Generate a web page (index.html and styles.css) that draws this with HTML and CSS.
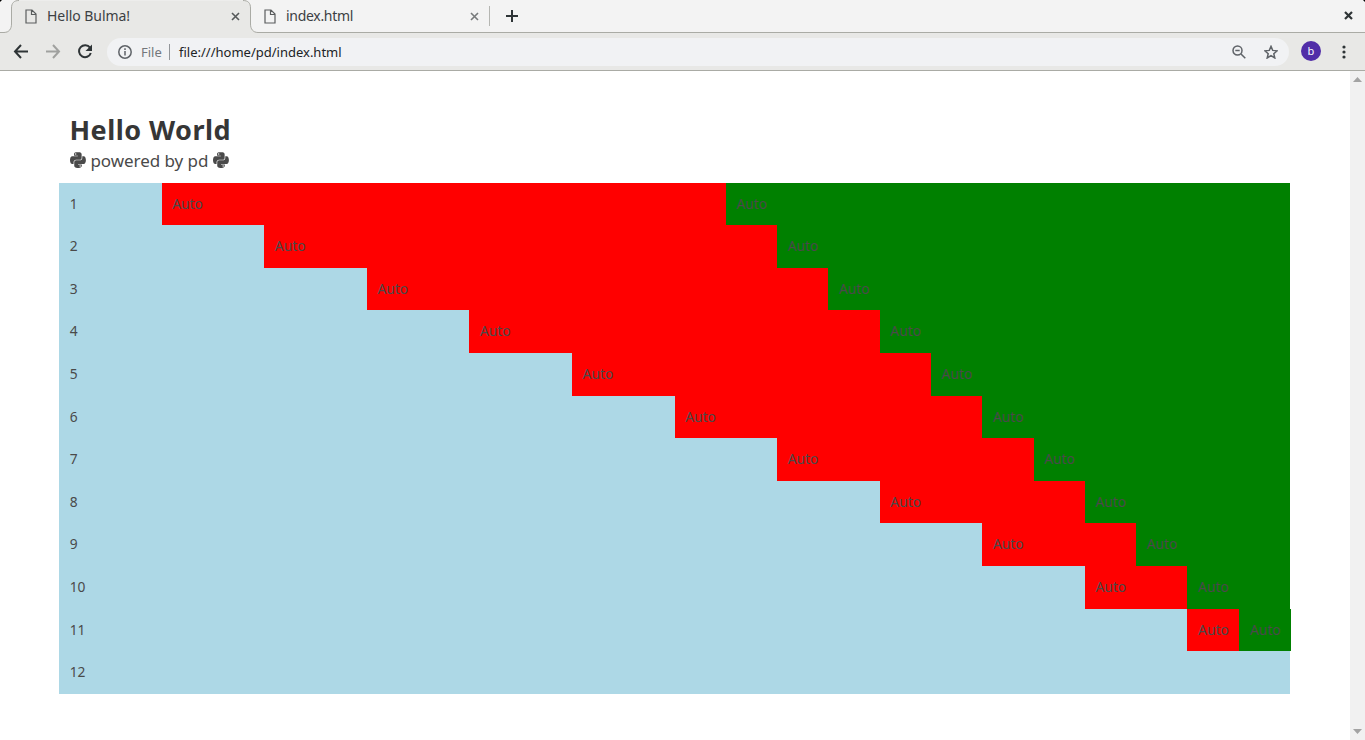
FILE: index.html
```html
<!DOCTYPE html>
<html lang="en">
<head>
<meta charset="utf-8">
<title>Hello Bulma!</title>
<link rel="stylesheet" href="styles.css">
</head>
<body>
<div class="browser">
  <div class="tabs">
    <div class="tab active">
      <svg class="tab-shape" width="264" height="34" viewBox="0 0 264 34"><path class="fill" d="M0 32.5C8 32.5 11.5 29 11.5 23V8C11.5 3 14 .5 19 .5H243C248 .5 250.500 3 250.500 8V23C250.500 29 254 32.500 260 32.500V34H0z"/><path class="edge" d="M0 32.500H4C9 32.500 11.500 29 11.500 24V8C11.500 3 14 .5 19 .5M243 .5C248 .5 250.500 3 250.500 8V24C250.500 29 253 32.500 258 32.500H264"/><path class="corner" d="M0 0h2L0 2z"/></svg>
      <svg class="doc" width="12" height="15" viewBox="0 0 12 15"><path d="M1 1h6l4 4v9H1zM6.500 1v4.500H11"/></svg>
      <span class="tab-title t1">Hello Bulma!</span>
      <svg class="close" width="9" height="9" viewBox="0 0 9 9"><path d="M1 1l7 7M8 1L1 8"/></svg>
    </div>
    <div class="tab second">
      <svg class="doc" width="12" height="15" viewBox="0 0 12 15"><path d="M1 1h6l4 4v9H1zM6.500 1v4.500H11"/></svg>
      <span class="tab-title t2">index.html</span>
      <svg class="close dim" width="9" height="9" viewBox="0 0 9 9"><path d="M1 1l7 7M8 1L1 8"/></svg>
    </div>
    <svg class="plus" width="12" height="12" viewBox="0 0 12 12"><path d="M6 0v12M0 6h12"/></svg>
    <svg class="win-close" width="9" height="9" viewBox="0 0 9 9"><path d="M1 1l7 7M8 1L1 8"/></svg>
    <svg class="right-corner" width="3" height="3" viewBox="0 0 3 3"><path d="M1 0h2v2z"/></svg>
  </div>
  <div class="toolbar">
    <svg class="nav" width="16" height="16" viewBox="0 0 16 16"><path d="M15 7.500H2.500M8 1L2 7.500 8 14"/></svg>
    <svg class="nav faded" width="16" height="16" viewBox="0 0 16 16"><path d="M1 7.500h12.500M8 1l6 6.500L8 14"/></svg>
    <svg class="nav" width="16" height="16" viewBox="0 0 16 16"><path d="M13 3.700A6 6 0 1 0 13.800 9"/><path class="solid" d="M15 .5V7H8.500z"/></svg>
    <div class="omnibox">
      <svg class="info" width="14" height="14" viewBox="0 0 14 14"><circle cx="7" cy="7" r="6.200"/><path d="M7 6v4.500M7 3.300v1.700"/></svg>
      <span class="scheme">File</span>
      <span class="url">file:///home/pd/index.html</span>
      <svg class="mag" width="14" height="14" viewBox="0 0 14 14"><circle cx="5.500" cy="5.500" r="4.500"/><path d="M3.300 5.500h4.400M9 9l4.300 4.300"/></svg>
      <svg class="star" width="14" height="14" viewBox="0 0 14 14"><path d="M7 1.400l1.700 4 4.400.4-3.300 2.900 1 4.300L7 10.700 3.200 13l1-4.300L.9 5.800l4.400-.4z"/></svg>
    </div>
    <span class="avatar">b</span>
    <svg class="menu" width="4" height="14" viewBox="0 0 4 14"><circle cx="2" cy="2" r="1.600"/><circle cx="2" cy="7" r="1.600"/><circle cx="2" cy="12" r="1.600"/></svg>
  </div>
  <div class="viewport">
    <main class="page">
      <h1 class="title"><span>Hello World</span></h1>
      <p class="subtitle">
        <svg class="python" viewBox="0 0 448 512"><path id="py" d="M439.800 200.500c-7.700-30.900-22.300-54.200-53.400-54.200h-40.100v47.400c0 36.800-31.200 67.800-66.800 67.800H172.700c-29.200 0-53.400 25-53.400 54.300v101.800c0 29 25.200 46 53.400 54.300 33.800 9.900 66.300 11.700 106.800 0 26.900-7.800 53.400-23.500 53.400-54.300v-40.700H226.200v-13.600h160.200c31.100 0 42.600-21.700 53.400-54.200 11.200-33.500 10.700-65.700 0-108.600zM286.200 404c11.100 0 20.100 9.100 20.100 20.300 0 11.300-9 20.400-20.100 20.400-11 0-20.100-9.200-20.100-20.400.1-11.300 9.100-20.300 20.100-20.300zM167.800 248.100h106.800c29.700 0 53.400-24.500 53.400-54.300V91.900c0-29-24.400-50.700-53.400-55.600-35.800-5.900-74.700-5.600-106.800.1-45.200 8-53.400 24.700-53.400 55.600v40.700h106.900v13.600h-147c-31.100 0-58.300 18.700-66.800 54.200-9.800 40.700-10.200 66.100 0 108.600 7.600 31.600 25.700 54.200 56.800 54.200H101v-48.800c0-35.300 30.500-66.400 66.800-66.400zm-6.700-142.600c-11.100 0-20.100-9.100-20.100-20.300.1-11.300 9-20.400 20.100-20.400 11 0 20.100 9.200 20.100 20.400s-9 20.300-20.100 20.300z"/></svg>
        <span>powered by pd</span>
        <svg class="python" viewBox="0 0 448 512"><use href="#py"/></svg>
      </p>
      <div class="rows">
        <div class="columns"><div class="column first c1">1</div><div class="column red">Auto</div><div class="column green">Auto</div></div>
        <div class="columns"><div class="column first c2">2</div><div class="column red">Auto</div><div class="column green">Auto</div></div>
        <div class="columns"><div class="column first c3">3</div><div class="column red">Auto</div><div class="column green">Auto</div></div>
        <div class="columns"><div class="column first c4">4</div><div class="column red">Auto</div><div class="column green">Auto</div></div>
        <div class="columns"><div class="column first c5">5</div><div class="column red">Auto</div><div class="column green">Auto</div></div>
        <div class="columns"><div class="column first c6">6</div><div class="column red">Auto</div><div class="column green">Auto</div></div>
        <div class="columns"><div class="column first c7">7</div><div class="column red">Auto</div><div class="column green">Auto</div></div>
        <div class="columns"><div class="column first c8">8</div><div class="column red">Auto</div><div class="column green">Auto</div></div>
        <div class="columns"><div class="column first c9">9</div><div class="column red">Auto</div><div class="column green">Auto</div></div>
        <div class="columns"><div class="column first c10">10</div><div class="column red">Auto</div><div class="column green">Auto</div></div>
        <div class="columns"><div class="column first c11">11</div><div class="column red">Auto</div><div class="column green">Auto</div></div>
        <div class="columns"><div class="column first c12">12</div></div>
      </div>
    </main>
    <div class="scrollbar">
      <svg width="9" height="5" viewBox="0 0 9 5"><path d="M0 5l4.500-5L9 5z"/></svg>
      <svg width="9" height="5" viewBox="0 0 9 5"><path d="M0 0l4.500 5L9 0z"/></svg>
    </div>
  </div>
</div>
</body>
</html>
```
FILE: styles.css
```css
* { box-sizing: border-box; }
body { margin: 0; background: #fff; font-family: "Noto Sans", "Open Sans", sans-serif; overflow: hidden; }
svg { display: block; flex: none; fill: none; }
span { white-space: nowrap; }
.browser { width: 1365px; height: 740px; display: flex; flex-direction: column; }
.tabs { position: relative; height: 33px; flex: none; display: flex; align-items: center; background: #f3f3f3; border-bottom: 1px solid #aaaba5; }
.tab { display: flex; align-items: center; height: 32px; font-size: 14px; color: #3c4043; }
.tab.active { position: relative; width: 251px; padding: 0 11px 0 25px; }
.tab.second { width: 239px; padding: 0 0 0 13px; }
.tab.second::after { content: ""; width: 1px; height: 20px; margin-left: 10px; background: #b5b6b2; }
.tab-shape { position: absolute; left: 0; top: 0; }
.tab-shape .fill { fill: #e8e8e6; }
.tab-shape .edge { stroke: #aaaba5; }
.tab-shape .corner, .right-corner { fill: #000; }
.right-corner { position: absolute; right: 0; top: 0; }
.doc, .tab-title, .close { position: relative; }
.doc { stroke: #5a5d5e; stroke-width: 1.2; }
.tab-title { margin-left: 10px; flex: 1; padding-bottom: 2px; }
.t1 { letter-spacing: -0.05px; }
.t2 { letter-spacing: -0.3px; }
.close { stroke: #55595a; stroke-width: 1.6; }
.close.dim { stroke: #777a7b; }
.plus { margin-left: 16px; stroke: #2e3436; stroke-width: 2; }
.win-close { margin-left: auto; margin-right: 12.500px; margin-bottom: 2px; stroke: #2e3436; stroke-width: 2.2; }
.toolbar { height: 38px; flex: none; display: flex; align-items: center; background: #e8e8e6; border-bottom: 1px solid #aaaba5; padding: 0 19.500px 0 13px; }
.nav { margin-right: 16px; stroke: #2e3436; stroke-width: 2; }
.nav.faded { stroke: #a0a19f; }
.nav .solid { fill: #2e3436; stroke: none; }
.omnibox { width: 1182px; height: 28px; margin-left: -2px; padding: 0 11px; border-radius: 14px; background: #f1f2f4; display: flex; align-items: center; font-size: 13px; color: #202326; }
.info { stroke: #5f6368; stroke-width: 1.5; }
.scheme { width: 29px; margin-left: 9px; padding-right: 8px; color: #73777b; border-right: 1px solid #93969a; line-height: 16px; }
.url { margin-left: 9px; flex: 1; }
.mag, .star { stroke: #5f6368; stroke-width: 1.5; }
.star { margin-left: 18px; }
.avatar { width: 20px; height: 20px; margin-left: 12px; margin-bottom: 2px; border-radius: 50%; background: #512da8; color: #fff; font-size: 11px; line-height: 20px; text-align: center; }
.menu { fill: #2e3436; margin-left: auto; }
.viewport { flex: 1; display: flex; min-height: 0; }
.page { flex: 1; padding: 43px 60px 0 59px; color: #4a4a4a; }
.title { margin: 0; padding-left: 10.500px; font-size: 27px; line-height: 32px; font-weight: 700; letter-spacing: .47px; color: #363636; }
.subtitle { margin: 0; height: 36.600px; padding: 4px 0 0 11px; display: flex; font-size: 17px; line-height: 22px; letter-spacing: -0.05px; }
.subtitle span { margin: 0 5px 0 4.500px; }
.python { width: 15.900px; height: 18.200px; margin-top: .8px; fill: #4a4a4a; }
.rows { width: 1231px; font-size: 13.800px; line-height: 21.300px; background: lightblue; }
.columns { display: flex; height: 42.600px; }
.column { padding: 10px 10.660px 11.300px; flex: 1 1 0; white-space: nowrap; }
.column.first { flex: none; background: lightblue; }
.red { background: red; }
.green { background: green; }
.c1 { width: 8.3333%; }
.c2 { width: 16.6667%; }
.c3 { width: 25%; }
.c4 { width: 33.3333%; }
.c5 { width: 41.6667%; }
.c6 { width: 50%; }
.c7 { width: 58.3333%; }
.c8 { width: 66.6667%; }
.c9 { width: 75%; }
.c10 { width: 83.3333%; }
.c11 { width: 91.6667%; }
.c12 { width: 100%; }
.scrollbar { width: 15px; background: #f1f1f1; display: flex; flex-direction: column; align-items: center; justify-content: space-between; padding: 6px 0; }
.scrollbar svg { fill: #a3a3a3; }
```
